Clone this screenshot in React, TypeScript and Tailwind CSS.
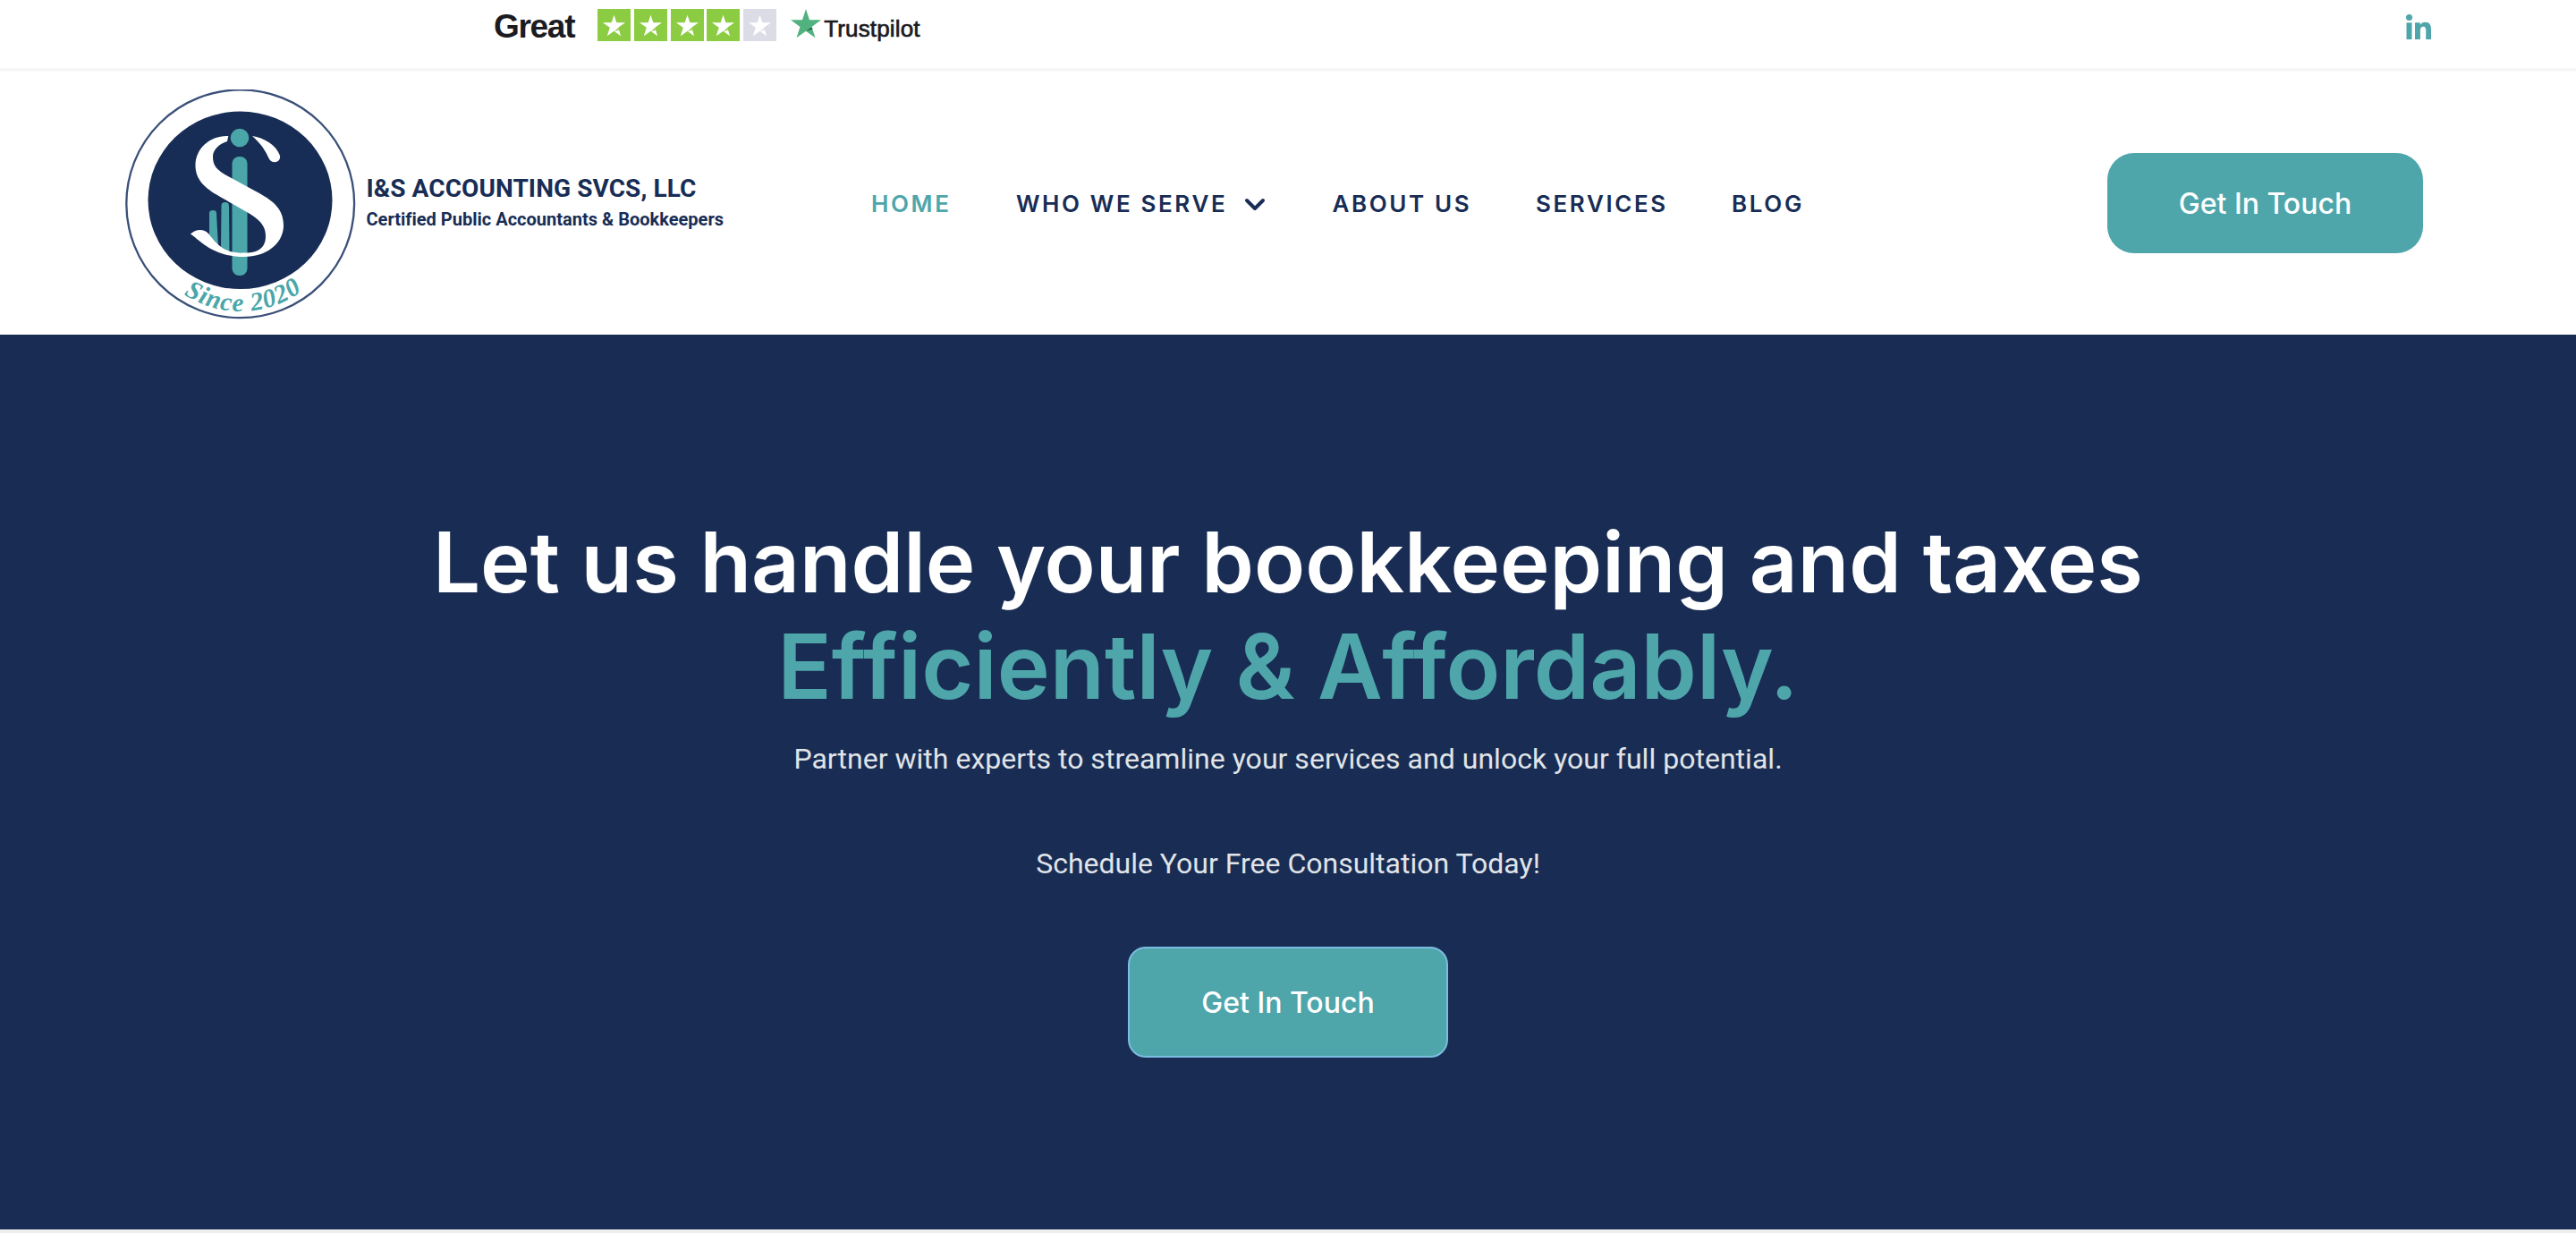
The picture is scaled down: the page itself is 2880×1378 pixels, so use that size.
import React from "react";

const NAV = "font-[Inter,sans-serif] text-[26px] font-semibold leading-8 tracking-[2.6px] whitespace-nowrap";

const STAR = "M12 0 L14.83 8.62 L24 8.67 L16.6 14.05 L19.4 22.7 L12 17.4 L4.6 22.7 L7.4 14.05 L0 8.67 L9.17 8.62 Z";

function RatingTile({ fill }: { fill: string }) {
  return (
    <svg className="block h-9 w-[37px]" viewBox="0 0 36 36" preserveAspectRatio="none">
      <rect width="36" height="36" fill={fill} />
      <path
        fill="#fff"
        d="M18 6.7 L20.8 15.3 L30.2 15.3 L22.6 20.8 L25.4 30.3 L18 24.8 L10.5 30.3 L13.4 20.8 L5.7 15.3 L15.2 15.3 Z"
      />
      <path fill={fill} d="M18.4 24.9 L23.4 23.4 L22.7 21.1 Z" />
    </svg>
  );
}

function Logo() {
  return (
    <svg className="mt-[6px] block size-[260px] shrink-0" viewBox="0 0 260 260">
      <circle cx="128.7" cy="127.8" r="127.4" fill="#fff" stroke="#3a5078" strokeWidth="2.3" />
      <ellipse cx="128.5" cy="123.8" rx="103" ry="99.3" fill="#182d55" />
      <circle cx="128" cy="54" r="10.3" fill="#4ba6a9" />
      <rect x="119.5" y="75" width="17" height="133" rx="8" fill="#4ba6a9" />
      <path d="M94 138 Q94 135 98 135 Q102 135 102 138 L104 176 L94 172 Z" fill="#4ba6a9" />
      <path d="M107.500 130 Q107.500 126 111.500 126 Q116 126 116 130 L116.500 182 L107 178 Z" fill="#4ba6a9" />
      <path
        fill="#fff"
        d="M115.300 52 C95 51 78 66 78.500 86 C79 103 92 112 108 121 L136 137 C150 145 157 152 157 164 C157 178 147 183 133 182.500 C110 184 102 172 93 161 C88 155 78 156 73 161.500 C84 169 98 187 133 187 C158 187 177 172 177 152 C177 134 166 125 150 116 L115 97 C102 90 98 85 98 75 C98 67 105 61 114 58 Z"
      />
      <path fill="#fff" d="M142 52 C155 54 169 62 173 74 C174 80 168 83 163 80 C159 77 159 67 142 52 Z" />
      <defs>
        <path id="since-arc" d="M16 158 A116.500 119 0 0 0 242 158" />
      </defs>
      <text
        fill="#4ba6a9"
        className="font-['Liberation_Serif',serif] text-[29px] font-bold italic"
        textAnchor="middle"
        textLength="141"
      >
        <textPath href="#since-arc" startOffset="51%" textLength="141">Since 2020</textPath>
      </text>
    </svg>
  );
}

export default function App() {
  return (
    <div className="h-[1378px] w-[2880px] overflow-hidden bg-white text-[#182d55]">
      <div className="flex h-20 items-start justify-between border-b-4 border-[#f6f6f6] pl-[552px] pr-[162px]">
        <div className="flex items-start pt-[10px]">
          <span className="w-[116px] font-['Liberation_Sans',Arial,sans-serif] text-[37px] font-bold leading-10 tracking-[-1.3px] text-[#1b1b21] whitespace-nowrap">
            Great
          </span>
          <div className="flex gap-[3.8px]">
            <RatingTile fill="#8bcc42" />
            <RatingTile fill="#8bcc42" />
            <RatingTile fill="#8bcc42" />
            <RatingTile fill="#8bcc42" />
            <RatingTile fill="#dcdce6" />
          </div>
          <svg className="ml-4 block h-[34px] w-[34px]" viewBox="0 0 24 24" preserveAspectRatio="none">
            <path d={STAR} fill="#52b27f" />
            <path d="M17.300 15.800 L12 17.400 L16.700 14.500 Z" fill="#24543c" />
          </svg>
          <span className="ml-[3px] mt-[6px] font-['Liberation_Sans',Arial,sans-serif] text-[26px] leading-8 tracking-[0.15px] text-[#1b1b21] whitespace-nowrap [-webkit-text-stroke:0.700px_#1b1b21]">
            Trustpilot
          </span>
        </div>
        <svg className="mt-4 block size-7" viewBox="0 0 28 28" fill="#4ea6ab">
          <circle cx="3.500" cy="3.500" r="3.500" />
          <rect x="0.500" y="9.300" width="6" height="18.700" />
          <path d="M10 9.300 H15.700 V11.800 C17 9.800 19 8.800 21.300 8.800 C26.500 8.800 28 12.200 28 17 V28 H22.200 V18 C22.200 15.500 21.700 13.800 19.300 13.800 C16.800 13.800 15.900 15.500 15.900 18 V28 H10 Z" />
        </svg>
      </div>

      <header className="flex h-[294px] items-center pl-[140px] pr-[171px]">
        <Logo />
        <div className="ml-[9.5px] w-[564.5px] font-[Roboto,sans-serif] font-bold whitespace-nowrap">
          <div className="text-[28px] leading-9 tracking-[0.08px]">I&amp;S ACCOUNTING SVCS, LLC</div>
          <div className="text-[20px] leading-8 tracking-[0.01px]">Certified Public Accountants &amp; Bookkeepers</div>
        </div>
        <nav className="flex flex-1 items-center pt-0.5">
          <a className={NAV + " w-[162px] text-[#4ea6ab]"}>HOME</a>
          <a className={NAV + " flex w-[353.5px] items-center"}>
            WHO WE SERVE
            <svg className="ml-[19px] mt-0.5 block h-4 w-6" viewBox="0 0 24 16" fill="none" stroke="#182d55" strokeWidth="4" strokeLinecap="round" strokeLinejoin="round">
              <path d="M3 3 L12 12 L21 3" />
            </svg>
          </a>
          <a className={NAV + " w-[227.5px]"}>ABOUT US</a>
          <a className={NAV + " w-[219px]"}>SERVICES</a>
          <a className={NAV}>BLOG</a>
        </nav>
        <a className="flex h-28 w-[353px] items-center justify-center rounded-[30px] bg-[#4ea6ab] pt-0.5 font-[Inter,sans-serif] text-[32px] font-medium leading-8 text-white">
          Get In Touch
        </a>
      </header>

      <main className="flex h-[1000px] flex-col items-center bg-[#192d54] pt-[198px] text-center font-[Inter,sans-serif] whitespace-nowrap">
        <h1 className="text-[94px] font-semibold leading-[113px] text-white">
          Let us handle your bookkeeping and taxes
        </h1>
        <h2 className="text-[100px] font-semibold leading-[119px] text-[#4ea6ab]">Efficiently &amp; Affordably.</h2>
        <p className="mt-[15px] font-[Roboto,sans-serif] text-[32px] leading-[58px] tracking-[0.02px] text-[#e0e4e8]">
          Partner with experts to streamline your services and unlock your full potential.
        </p>
        <p className="mt-[59px] font-[Roboto,sans-serif] text-[32px] leading-[58px] text-[#e0e4e8]">
          Schedule Your Free Consultation Today!
        </p>
        <a className="mt-[64px] flex h-[124px] w-[358px] items-center justify-center rounded-[20px] border-2 border-[#7cbce0] bg-[#4ea6ab] pt-0.5 text-[32px] font-medium leading-8 text-white">
          Get In Touch
        </a>
      </main>
      <div className="h-1 bg-[#eeeeee]" />
    </div>
  );
}
